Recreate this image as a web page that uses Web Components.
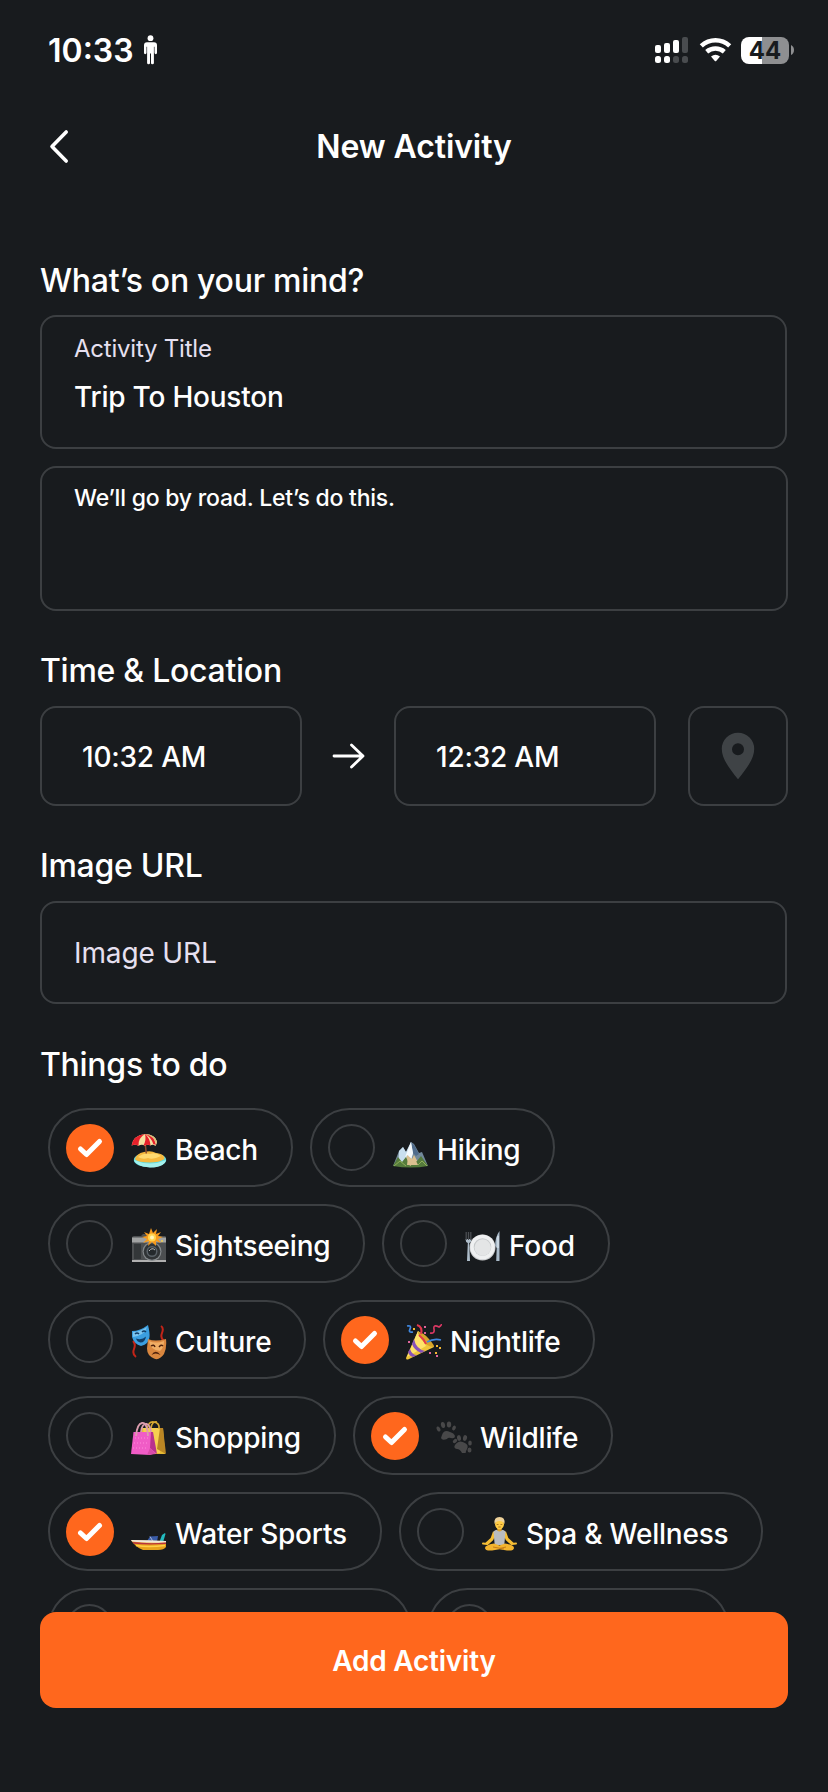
<!DOCTYPE html>
<html lang="en">
<head>
<meta charset="utf-8">
<title>New Activity</title>
<style>
html,body{margin:0;background:#181b1e}
body{width:828px;height:1792px;overflow:hidden;font-family:Inter,"Noto Sans",sans-serif;color:#fff}
</style>
</head>
<body>
<activity-screen></activity-screen>
<script>
const define = (name, html, setup) => {
  const tpl = document.createElement('template');
  tpl.innerHTML = html;
  customElements.define(name, class extends HTMLElement {
    connectedCallback() {
      if (this.shadowRoot) return;
      this.attachShadow({mode: 'open'}).append(tpl.content.cloneNode(true));
      if (setup) setup(this, this.shadowRoot);
    }
  });
};

const EMOJI = {
  beach: `<ellipse cx="19" cy="28" rx="16.2" ry="7.3" fill="#5fdde4"/><path d="M3 28q16 7 32 0q-1 6-12 7.5q-17 0-20-7.500z" fill="#a4f1ec"/><path d="M4 27.500q1-6 9-7.500q7-2 12 1q9 1 8.500 6q-5 3.500-15 3.500q-11 0-14.500-3z" fill="#f6b93e"/><path d="M7 25q6-5 12-3q6-2 11 2q-8 4-13 2q-5 2-10-1z" fill="#ffda70"/><path d="M14 10l1.300 11.500" stroke="#8b4a2c" stroke-width="1.500"/><path d="M.6 13.500Q2 3.500 14 2q10.500.5 12 7.500-.5 3-1.500 4.500-3-2-5-.5-3-1.500-5.500.3-3-2-6.500 0-3.500-2-6.900-.3z" fill="#f5e1a1"/><path d="M.6 13.500Q2 3.500 14 2 7 6 7.500 13.800q-3.500-2-6.900-.3z" fill="#e8202b"/><path d="M14 2q5 4 5.500 11.500-3-1.500-5.500.3l-1.500-.6q3-5 1.500-11.200zM14 2q7 1 9 5l2 6q-1.500-1-2.500-.6Q20 5 14 2z" fill="#e8202b"/><path d="M14 2q9.500 0 12 7.500l-.7 3Q23 4 14 2z" fill="#d9bd7c"/>`,
  hiking: `<path d="M0 34l6-15 4-4 3 5 5-10 3 2 5 9 3-1 6 14z" fill="#72899a"/><path d="M6 19l4-4 3 5 5-10 2 11-3 13H5z" fill="#c9dfee"/><path d="M18 10l3 3 5 9-3 2-3-3z" fill="#506c8c"/><path d="M18 10l-3 8-3 7 3-2 3 4 2-6z" fill="#f5f9fb"/><path d="M14 23l5 4 2-4 6 11H12z" fill="#dbc090"/><path d="M0 34l5-9 4 5 4-5 4 9 7-5 4-5 7 10q-17 3-35 0z" fill="#557b3c"/><path d="M15 25l4 3 2-3 4 8H14z" fill="#dbc090"/><path d="M1 34l6-5 6 5M25 33l4-4 5 5" fill="none" stroke="#8fae59"/>`,
  camera: `<path d="M1 10q0-2 2-2h7l2-2h10l2 2h10q1 0 1 2v23q0 1-1 1H2q-1 0-1-1z" fill="#4c4f51"/><path d="M1 9.500h34v5H1z" fill="#a1a3a3"/><path d="M1 32h34v2H1z" fill="#b0b0b0"/><path d="M3 16h7v15H3z" fill="#333739"/><circle cx="21" cy="23.500" r="9.500" fill="#83888b"/><circle cx="21" cy="23.500" r="8.300" fill="#303436"/><circle cx="21" cy="23.500" r="5.500" fill="#596167"/><circle cx="21" cy="23.500" r="4" fill="#24292c"/><path d="M18 23q3-4 6-1" stroke="#bbb" fill="none"/><path d="M20 0l2 5 4-4-1 5 5-2-3 4 5 1-5 2 3 4-5-2 0 5-4-4-4 4 1-5-6 2 4-4-5-2 5-1-3-4 5 2z" fill="#f79b1c"/><circle cx="21" cy="9.500" r="4" fill="#ffd450"/><circle cx="21" cy="9.500" r="2" fill="#fff6b8"/><circle cx="31" cy="13" r="1" fill="#f2ce4b"/>`,
  food: `<ellipse cx="17.500" cy="19.500" rx="13" ry="13" fill="#c8cacc"/><circle cx="17.500" cy="19" r="12.300" fill="#eff0f1"/><circle cx="17.500" cy="19" r="8.800" fill="#c5c8ca"/><circle cx="17.700" cy="19.500" r="8.200" fill="#e4e5e6"/><path d="M.5 11q0 3 2.300 4L2 33h3l-.8-18Q6.500 14 6.500 11z" fill="#aebdca"/><path d="M1.200 4v8M3.500 4v8M5.800 4v8" stroke="#4b4f53" stroke-width="1.300"/><path d="M34.500 3v30h-3.300l.5-13-1.500-2Q30 9 34.500 3z" fill="#a9bac9"/><path d="M33 8v12" stroke="#e9f2f9"/>`,
  masks: `<path d="M30 2q3 2 1 7t2 8M2 17q3 3 1 8t2 8" stroke="#c42418" stroke-width="2" fill="none"/><path d="M1 7q8 0 16-6q2 8 1.500 12Q18 20 10 22Q3 20 1 13z" fill="#3b9fe0"/><path d="M2 8q7 0 14-5-2 8-14 10z" fill="#7bc5ef"/><path d="M4 10q2-2 4 0M11 8q2-2 4 0" fill="none" stroke="#103d67" stroke-width="1.500"/><path d="M5 14.500q6 2 10-2-1 6-5.500 6-3.500-.5-4.500-4z" fill="#103d67"/><path d="M17 15q7 3 18 0 1 9-2 15-5 7-10 4.500-7-3-7-10z" fill="#d9873f"/><path d="M18 17q7 3 15 0 0 7-4 10-10-1-11-10z" fill="#f0ae65"/><path d="M20 22q3-2 4 1M28 23q2-3 4-1" fill="none" stroke="#4f210b" stroke-width="1.400"/><path d="M20.500 31q4-6.500 9 0-5-3-9 0z" fill="#4f210b"/>`,
  party: `<path d="M12 7L0 34q0 2 2 1.500L28 23Q22 13 12 7z" fill="#efc53a"/><path d="M12 7L1 33 20 22z" fill="#ffe36a"/><path d="M8 15Q10 25 19 27L15 29Q8 26 6 20zM4 25q2 6 7 6l-4 2q-4-1-5-5z" fill="#8752b8"/><path d="M12 8q5 0 11 7t5 8q-7 0-12-7-4-5-4-8z" fill="#d8a42a"/><path d="M13 11q5 4 7 9M11 1q6 2 4 9" fill="none" stroke="#e4384c" stroke-width="2"/><path d="M21 18q7-4 14-2M1 2q5-1 3 3t3 3" fill="none" stroke="#3f87df" stroke-width="1.700"/><path d="M24 9q5 1 4-4t5-2q3-2 2-3" fill="none" stroke="#dc3864" stroke-width="1.600"/><path d="M7 4h2v2H7zM30 21h2v2h-2zM33 23h2v2h-2zM29 28h2v2h-2z" fill="#f3b732"/><path d="M18 2h2v2h-2zM23 28h2v2h-2zM30 31h2v2h-2zM2 17h2v2H2zM18 8h2v2h-2z" fill="#df669c"/>`,
  bags: `<path d="M10 8h22l2 26H14z" fill="#e5b934"/><path d="M12 8h17v25H15z" fill="#f6cf51"/><path d="M29 8h3l3 26-9-5z" fill="#ba8624"/><path d="M16 10q1-9 7-8t5 7M20 8q1-7 6-6" fill="none" stroke="#d6a931" stroke-width="1.700"/><path d="M2.500 12H20l5 21-6 2L0 34z" fill="#f05cc6"/><path d="M20 12h2l4 22-7-6z" fill="#b9328d"/><path d="M19 28l6 6-9 1z" fill="#d84ca8"/><path d="M5 16Q6 4 11 3t6 13M10 12q1-9 6-8 3 1 4 8" fill="none" stroke="#db9dae" stroke-width="1.800"/><path d="M4 18h14M3 23h15M2 28h14" stroke="#ff8adc" stroke-dasharray="1 2"/>`,
  paws: `<g fill="#484849"><path d="M6 15q2-6 8-3 4 1 5 4 0 3-4 2-3-1-4 1-5 2-6-1z"/><ellipse cx="2.500" cy="9" rx="1.700" ry="2.700" transform="rotate(-25 2.500 9)"/><ellipse cx="7" cy="5" rx="2.100" ry="3" transform="rotate(-10 7 5)"/><ellipse cx="13" cy="4.500" rx="2.200" ry="3"/><ellipse cx="18" cy="8" rx="1.700" ry="2.600" transform="rotate(25 18 8)"/><path d="M19 25q4-6 10-2 4 2 2 6t-1 4-4 0q-2-4-5-4-4-1-2-4z"/><ellipse cx="19" cy="21" rx="1.700" ry="2.500" transform="rotate(50 19 21)"/><ellipse cx="23" cy="18" rx="2" ry="2.900" transform="rotate(-8 23 18)"/><ellipse cx="29" cy="18" rx="2" ry="2.900" transform="rotate(14 29 18)"/><ellipse cx="34" cy="23" rx="1.800" ry="2.500"/><ellipse cx="33.500" cy="30" rx="2" ry="2.500"/></g>`,
  boat: `<path d="M16 25l3-4.500 8-.5-1 6z" fill="#395ba8"/><path d="M19 20.500l3 5" stroke="#a8b6d6"/><path d="M28 27l3-8 3-2 .5 1-3 10z" fill="#22bbc0"/><path d="M0 24q17 1 35 1v6q-2 3-8 3H12Q4 31 0 24z" fill="#e8a11c"/><path d="M0 24q17 0 35 1v1.500q-20 1-34-1z" fill="#f0e8db"/><path d="M1.500 26q16 2 33.500.5v1.500q-20 1-32-.3z" fill="#b8323e"/><path d="M5 29.500q12 2 29 0" stroke="#ffcf46" fill="none" stroke-width="1.600"/>`,
  yoga: `<path d="M12.500 16L10 23 4.500 28M22.500 16L25 23l5.500 5" fill="none" stroke="#f5bd35" stroke-width="3.200" stroke-linejoin="round"/><path d="M1 27.500l4 .5M34 27.500l-4 .5" stroke="#f5bd35" stroke-width="2" stroke-linecap="round"/><path d="M11.500 15.500q1.500-1.500 3.500-1.800 2.500 2.500 5 0 2 .3 3.500 1.800L22.300 29h-9.600z" fill="#b9bcc0"/><path d="M3 32q0-3 9-4.500l5.500 2 5.500-2q9 1.500 9 4.500 0 3-7 2.500l-7.500-1.300-7.500 1.300Q3 35 3 32z" fill="#f3b42e"/><path d="M11 31l11 2M24 31l-6.500 1.500" stroke="#c57b18"/><path d="M15.300 11h4.400v3.500q-2.200 1.800-4.400 0z" fill="#dfa02a"/><ellipse cx="17.500" cy="8" rx="4.500" ry="5.300" fill="#ffcc45"/><path d="M12.500 8Q11.500 1 17.500 1T22.500 8q-1.500-3-5-3t-5 3z" fill="#eed29a"/><path d="M14.700 8.500h1.800M18.500 8.500h1.800M16.300 11h2.400" stroke="#9c641b" stroke-width=".8"/>`
};

define('status-bar', `
<style>
:host{display:flex;height:100px;align-items:center;padding:0 34px 0 48px;flex:none}
.time{font-size:32px;font-weight:600;line-height:40px;padding-top:1px}
svg{display:block}
.person{margin-left:9px}
.grow{flex:1}
.bat{display:grid;width:48px;height:27px;border-radius:8px;background:linear-gradient(90deg,#fff 21px,#8e8f91 21px);place-items:center;color:#181b1e;font-size:24px;font-weight:700;line-height:27px;margin-left:9px}
</style>
<span class="time">10:33</span>
<svg class="person" width="15" height="30" viewBox="0 0 15 30"><g fill="#fff"><circle cx="7.500" cy="3.200" r="2.900"/><path d="M4 7.200h7q3 0 3 3v7.600q0 1.400-1.200 1.400t-1.300-1.400v-6h-.6V28q0 1.300-1.500 1.300T8 28v-9.500H7V28q0 1.300-1.400 1.300T4.100 28V11.800h-.6v6q0 1.400-1.300 1.400T1 17.800v-7.600q0-3 3-3z"/></g></svg>
<span class="grow"></span>
<svg width="34" height="28" viewBox="0 0 34 28"><g fill="#fff"><rect y="9" width="6" height="8" rx="2"/><rect x="9" y="7" width="6" height="10" rx="2"/><rect x="18" y="4" width="6" height="13" rx="2"/><rect y="20" width="6" height="7" rx="2.500"/><rect x="9" y="20" width="6" height="7" rx="2.500"/></g><g fill="#494c4f"><rect x="27" y="1" width="6" height="16" rx="2"/><rect x="18" y="20" width="6" height="7" rx="2.500"/><rect x="27" y="20" width="6" height="7" rx="2.500"/></g></svg>
<svg style="margin-left:10px" width="33" height="26" viewBox="0 0 33 26"><g fill="none" stroke="#fff" stroke-width="4.600"><path d="M2.300 8.900Q8.500 3.300 16.500 3.300T30.700 8.900"/><path d="M7.700 14.700Q11.500 11.500 16.500 11.500T25.300 14.700"/></g><path d="M12 19.500Q16.500 16 21 19.500L17.200 24q-.7.700-1.400 0z" fill="#fff"/></svg>
<span class="bat">44</span>
<svg style="margin-left:2px" width="3" height="10" viewBox="0 0 3 10"><path d="M0 0q3 1.500 3 5t-3 5z" fill="#8e8f91"/></svg>
`);

define('nav-header', `
<style>
:host{display:grid;grid-template-columns:80px 1fr 80px;height:93px;align-items:center;flex:none}
svg{display:block;margin-left:47.500px}
h1{margin:0;text-align:center;font-size:32px;font-weight:600;line-height:40px;letter-spacing:-.1px;padding-top:1px}
</style>
<svg width="24" height="36" viewBox="0 0 24 36"><path d="M18.200 3L4 17.500 18.200 32" fill="none" stroke="#fff" stroke-width="3.600" stroke-linecap="round" stroke-linejoin="round"/></svg>
<h1><slot></slot></h1>
`);

define('section-title', `
<style>:host{display:block;height:40px;font-size:32px;line-height:42px;font-weight:500;letter-spacing:-.28px;white-space:nowrap}</style><slot></slot>`);

define('field-box', `
<style>
:host{display:flex;flex-direction:column;box-sizing:border-box;border:2px solid #3c3f42;border-radius:16px;flex:none}
</style><slot></slot>`);

define('text-line', `
<style>:host{display:block;white-space:nowrap;letter-spacing:var(--ls,-.22px)}</style><slot></slot>`);

define('check-dot', `
<style>
:host{display:block;box-sizing:border-box;width:47px;height:47px;border:2px solid #3c3f42;border-radius:50%;margin-right:1px;flex:none}
:host([on]){width:48px;height:48px;border:0;background:#ff671d;margin-right:0}
svg{display:none}:host([on]) svg{display:block}
</style>
<svg width="48" height="48" viewBox="0 0 48 48"><path d="M14.500 25l6 5.500L33.500 17.500" fill="none" stroke="#fff" stroke-width="5" stroke-linecap="round" stroke-linejoin="round"/></svg>`);

define('activity-chip', `
<style>
:host{display:flex;box-sizing:border-box;height:79px;border:2px solid #3c3f42;border-radius:40px;padding:14px 0 0 16px;flex:none}
svg{display:block;margin:8px 0 0 17px;flex:none}
span{font-size:28px;font-weight:500;line-height:36px;margin:8px 0 0 8px;white-space:nowrap;letter-spacing:-.22px}
</style>
<check-dot></check-dot><svg width="36" height="36" viewBox="0 0 36 36"></svg><span><slot></slot></span>`,
(el, root) => {
  el.style.width = el.getAttribute('w') + 'px';
  if (el.hasAttribute('on')) root.querySelector('check-dot').setAttribute('on', '');
  root.querySelector('svg').innerHTML = EMOJI[el.getAttribute('icon')] || '';
});

define('chip-row', `
<style>:host{display:flex;gap:17px;height:79px;margin-bottom:17px}</style><slot></slot>`);

define('primary-button', `
<style>
:host{display:grid;place-items:center;box-sizing:border-box;height:96px;padding-top:2px;border-radius:16px;background:#ff671d;font-size:28px;font-weight:600;line-height:36px;letter-spacing:-.23px}
</style><slot></slot>`);

define('activity-screen', `
<style>
:host{display:flex;flex-direction:column;width:828px;height:1792px;background:#181b1e}
main{flex:1;min-height:0;overflow:hidden;padding:67px 40px 0}
footer{height:180px;padding:0 40px;box-sizing:border-box;flex:none}
.times{display:flex;align-items:center;margin-top:16px}
.times field-box{height:100px;justify-content:center}
.t{width:262px;padding:2px 0 0 40px;font-size:28px;font-weight:500}
.chips{padding:24px 0 0 8px}
</style>
<status-bar></status-bar>
<nav-header>New Activity</nav-header>
<main>
  <section-title>What’s on your mind?</section-title>
  <field-box style="width:747px;height:134px;margin-top:15px;padding:17px 32px 0">
    <text-line style="font-size:24px;line-height:30px;color:#e6e0f0">Activity Title</text-line>
    <text-line style="font-size:28px;line-height:36px;font-weight:500;margin-top:15px">Trip To Houston</text-line>
  </field-box>
  <field-box style="width:748px;height:145px;margin-top:17px;padding:15px 32px 0">
    <text-line style="font-size:23px;line-height:30px;font-weight:500">We’ll go by road. Let’s do this.</text-line>
  </field-box>
  <section-title style="margin-top:39px">Time &amp; Location</section-title>
  <div class="times">
    <field-box class="t"><text-line>10:32 AM</text-line></field-box>
    <svg width="36" height="28" viewBox="0 0 36 28" style="margin:0 27px 0 29px"><path d="M3 14h29M20.500 3L32 14 20.500 25" fill="none" stroke="#fff" stroke-width="2.800" stroke-linecap="round" stroke-linejoin="round"/></svg>
    <field-box class="t"><text-line>12:32 AM</text-line></field-box>
    <field-box style="width:100px;margin-left:32px;align-items:center"><svg width="34" height="48" viewBox="0 0 34 48"><path d="M17 .7a16 16 0 0 1 16.200 16.300c0 10-8 20-16.200 30.300C8.800 37 .8 27 .8 17A16 16 0 0 1 17 .7zm0 10.600a6 6 0 1 0 0 12 6 6 0 0 0 0-12z" fill="#3f4346"/></svg></field-box>
  </div>
  <section-title style="margin-top:39px">Image URL</section-title>
  <field-box style="width:747px;height:103px;margin-top:16px;padding:0 32px;justify-content:center">
    <text-line style="font-size:28px;line-height:36px;color:#e6e0f0;--ls:-.13px">Image URL</text-line>
  </field-box>
  <section-title style="margin-top:40px">Things to do</section-title>
  <div class="chips">
    <chip-row><activity-chip w="245" icon="beach" on>Beach</activity-chip><activity-chip w="245" icon="hiking">Hiking</activity-chip></chip-row>
    <chip-row><activity-chip w="317" icon="camera">Sightseeing</activity-chip><activity-chip w="228" icon="food">Food</activity-chip></chip-row>
    <chip-row><activity-chip w="258" icon="masks">Culture</activity-chip><activity-chip w="272" icon="party" on>Nightlife</activity-chip></chip-row>
    <chip-row><activity-chip w="288" icon="bags">Shopping</activity-chip><activity-chip w="260" icon="paws" on>Wildlife</activity-chip></chip-row>
    <chip-row><activity-chip w="334" icon="boat" on>Water Sports</activity-chip><activity-chip w="364" icon="yoga">Spa &amp; Wellness</activity-chip></chip-row>
    <chip-row><activity-chip w="363"></activity-chip><activity-chip w="301"></activity-chip></chip-row>
  </div>
</main>
<footer><primary-button>Add Activity</primary-button></footer>
`);
</script>
</body>
</html>
